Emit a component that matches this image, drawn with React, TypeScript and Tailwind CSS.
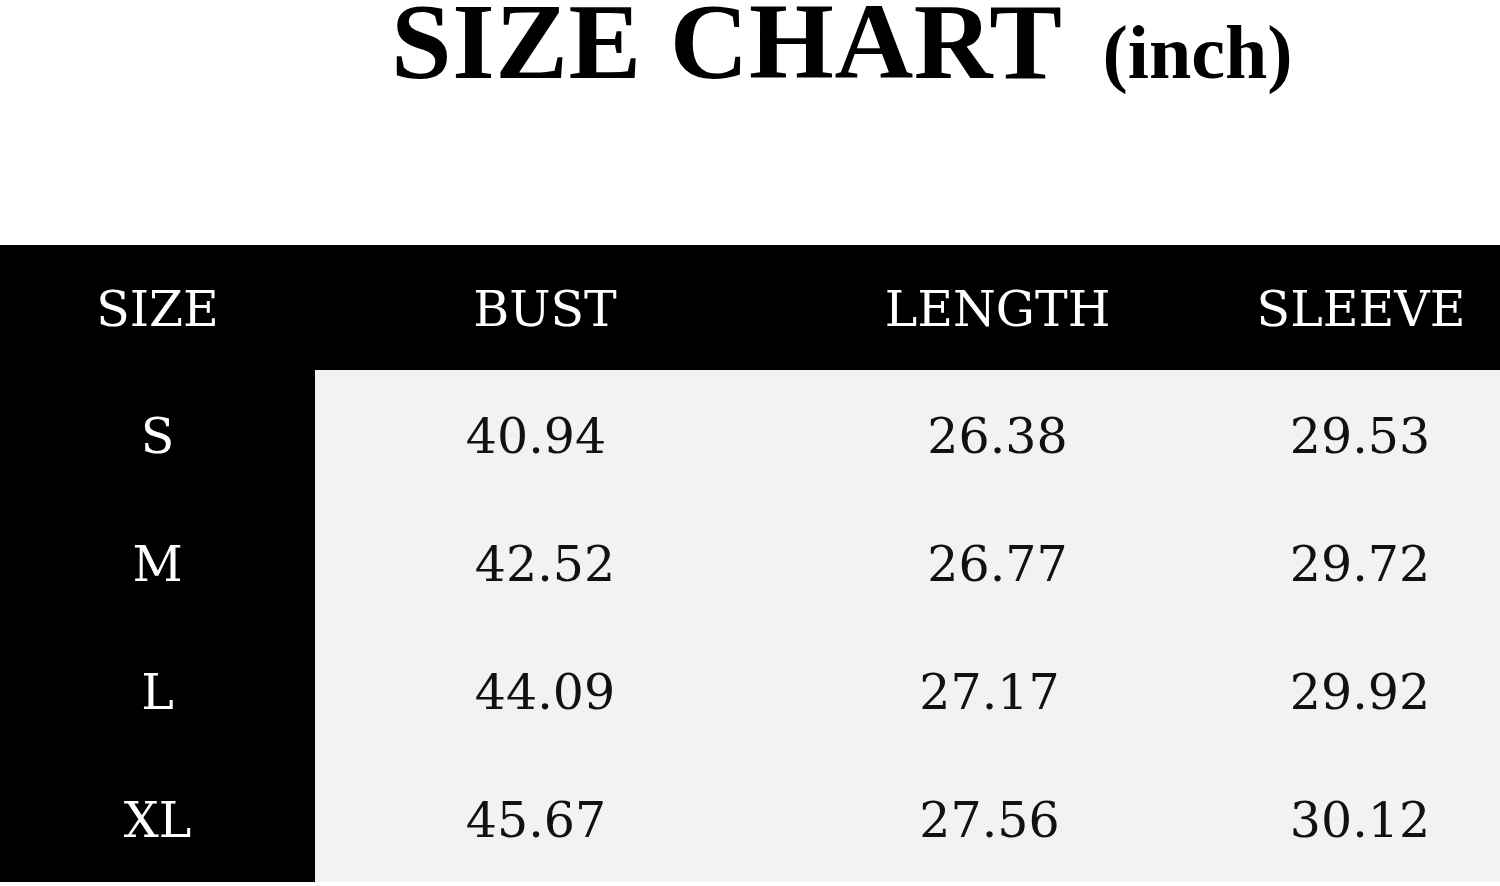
import React from "react";

const rows = [
  { size: "S", cells: [
    { v: "40.94", c: "pr-[18px]" },
    { v: "26.38", c: "pl-0" },
    { v: "29.53", c: "pl-0" },
  ] },
  { size: "M", cells: [
    { v: "42.52", c: "pl-0" },
    { v: "26.77", c: "pl-0" },
    { v: "29.72", c: "pl-0" },
  ] },
  { size: "L", cells: [
    { v: "44.09", c: "pl-0" },
    { v: "27.17", c: "pr-[16px]" },
    { v: "29.92", c: "pl-0" },
  ] },
  { size: "XL", cells: [
    { v: "45.67", c: "pr-[18px]" },
    { v: "27.56", c: "pr-[16px]" },
    { v: "30.12", c: "pl-0" },
  ] },
];

const serif = "font-['DejaVu_Serif','Liberation_Serif',serif]";

export default function App() {
  return (
    <div className="w-[1500px] h-[886px] bg-white overflow-hidden flex flex-col">
      <div className="h-[245px] flex items-start pl-[391px]">
        <div className="flex items-baseline font-['Liberation_Serif',serif] font-bold text-black leading-[0.85] mt-[-4px]">
          <span className="text-[109px] tracking-[0.6px]">SIZE CHART</span>
          <span className="text-[76px] ml-[40px]">(inch)</span>
        </div>
      </div>
      <div className={`grid grid-cols-[315px_460px_445px_280px] ${serif} text-[49px] leading-none`}>
        <div className="h-[125px] bg-black text-white flex items-center justify-center pt-[4px]">SIZE</div>
        <div className="h-[125px] bg-black text-white flex items-center justify-center pt-[4px]">BUST</div>
        <div className="h-[125px] bg-black text-white flex items-center justify-center pt-[4px]">LENGTH</div>
        <div className="h-[125px] bg-black text-white flex items-center justify-center pt-[4px] pl-[2px]">SLEEVE</div>
        {rows.map((r) => (
          <React.Fragment key={r.size}>
            <div className="h-[128px] bg-black text-white flex items-center justify-center pt-[4px]">{r.size}</div>
            {r.cells.map((cell, i) => (
              <div
                key={i}
                className={`h-[128px] bg-[#f2f2f2] text-[#111] flex items-center justify-center pt-[4px] ${cell.c}`}
              >
                {cell.v}
              </div>
            ))}
          </React.Fragment>
        ))}
      </div>
    </div>
  );
}
